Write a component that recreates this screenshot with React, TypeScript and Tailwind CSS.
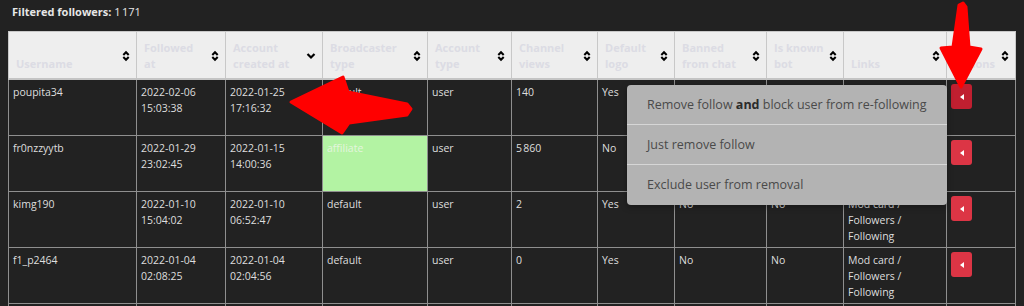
import React from 'react';

type Follower = {
    username: string;
    followedAt: [string, string];
    createdAt: [string, string];
    broadcasterType: string;
    accountType: string;
    views: string;
    defaultLogo: string;
    banned: string;
    knownBot: string;
};

const columns = [
    { label: ['Username'], width: 128, sort: 'both' },
    { label: ['Followed', 'at'], width: 89, sort: 'both' },
    { label: ['Account', 'created at'], width: 97, sort: 'desc' },
    { label: ['Broadcaster', 'type'], width: 105, sort: 'both' },
    { label: ['Account', 'type'], width: 84, sort: 'both' },
    { label: ['Channel', 'views'], width: 86, sort: 'both' },
    { label: ['Default', 'logo'], width: 77, sort: 'both' },
    { label: ['Banned', 'from chat'], width: 92, sort: 'both' },
    { label: ['Is known', 'bot'], width: 77, sort: 'both' },
    { label: ['Links'], width: 103, sort: 'both' },
    { label: ['Actions'], width: 69, sort: 'both' },
];

const followers: Follower[] = [
    {
        username: 'poupita34',
        followedAt: ['2022-02-06', '15:03:38'],
        createdAt: ['2022-01-25', '17:16:32'],
        broadcasterType: 'default',
        accountType: 'user',
        views: '140',
        defaultLogo: 'Yes',
        banned: 'No',
        knownBot: 'No',
    },
    {
        username: 'fr0nzzyytb',
        followedAt: ['2022-01-29', '23:02:45'],
        createdAt: ['2022-01-15', '14:00:36'],
        broadcasterType: 'affiliate',
        accountType: 'user',
        views: '5\u202F860',
        defaultLogo: 'No',
        banned: 'No',
        knownBot: 'No',
    },
    {
        username: 'kimg190',
        followedAt: ['2022-01-10', '15:04:02'],
        createdAt: ['2022-01-10', '06:52:47'],
        broadcasterType: 'default',
        accountType: 'user',
        views: '2',
        defaultLogo: 'Yes',
        banned: 'No',
        knownBot: 'No',
    },
    {
        username: 'f1_p2464',
        followedAt: ['2022-01-04', '02:08:25'],
        createdAt: ['2022-01-04', '02:04:56'],
        broadcasterType: 'default',
        accountType: 'user',
        views: '0',
        defaultLogo: 'Yes',
        banned: 'No',
        knownBot: 'No',
    },
];

function SortIcon({ sort }: { sort: string }) {
    if (sort === 'desc') {
        return (
            <svg width="10" height="8" viewBox="0 0 10 8" className="shrink-0">
                <path d="M1.5 2 L5 5.5 L8.5 2" fill="none" stroke="#000" strokeWidth="2.2" />
            </svg>
        );
    }
    return (
        <svg width="8" height="12" viewBox="0 0 8 12" className="shrink-0">
            <path d="M1.3 5 L4 2.2 L6.7 5" fill="none" stroke="#000" strokeWidth="2" />
            <path d="M1.3 7 L4 9.8 L6.7 7" fill="none" stroke="#000" strokeWidth="2" />
        </svg>
    );
}

function ActionButton({ active }: { active?: boolean }) {
    return (
        <button
            className={`flex items-center justify-center w-[21px] h-[25px] rounded-[3px] ${
                active ? 'bg-[#c01f30]' : 'bg-[#dc3545]'
            }`}
        >
            <svg width="4" height="6" viewBox="0 0 4 6">
                <path d="M4 0 L0 3 L4 6 Z" fill="#fff" />
            </svg>
        </button>
    );
}

function RemoveMenu() {
    return (
        <div className="absolute right-full top-[1px] mr-[4px] w-[320px] rounded-[4px] bg-[#b3b3b3] text-[12.5px] leading-[16px] text-[#4a4a4a] shadow-[0_2px_6px_rgba(0,0,0,0.35)]">
            <div className="h-[39px] flex items-center px-5 whitespace-nowrap">
                <span>
                    Remove follow <b className="font-bold text-[#2b2b2b]">and</b> block user from re-following
                </span>
            </div>
            <div className="h-[1px] bg-[#d6d6d6]" />
            <div className="h-[39px] flex items-center px-5">Just remove follow</div>
            <div className="h-[1px] bg-[#d6d6d6]" />
            <div className="h-[40px] flex items-center px-5">Exclude user from removal</div>
        </div>
    );
}

export default function App() {
    const cell = 'border border-[#8f8f8f] align-top px-[4px] pt-[4px] pb-[3px]';

    return (
        <div
            className="relative w-[1024px] h-[306px] overflow-hidden bg-[#222222] text-[11px] leading-[16px] text-[#dedede]"
            style={{ fontFamily: '"Open Sans", "Noto Sans", sans-serif' }}
        >
            {/* Counter */}
            <div className="px-[12px] pt-[4px] h-[31px] text-[#e6e6e6]">
                <span className="font-bold">Filtered followers:</span> 1&#8239;171
            </div>

            {/* Followers table */}
            <table className="ml-[8px] w-[1007px] table-fixed border-collapse">
                <colgroup>
                    {columns.map((col, i) => (
                        <col key={i} style={{ width: col.width }} />
                    ))}
                </colgroup>
                <thead>
                    <tr className="bg-[#eeeeee]">
                        {columns.map((col, i) => (
                            <th
                                key={i}
                                className="border border-[#c8c8c8] border-b-2 border-b-[#c4c4c4] pl-[7px] pr-[6px] pt-[8px] pb-[6px] text-left font-bold text-[#dcdce4]"
                            >
                                <div className="flex items-center justify-between gap-1">
                                    <div className="flex flex-col justify-end h-[32px]">
                                        {col.label.map((line) => (
                                            <span key={line}>{line}</span>
                                        ))}
                                    </div>
                                    <SortIcon sort={col.sort} />
                                </div>
                            </th>
                        ))}
                    </tr>
                </thead>
                <tbody className="text-[10.5px]">
                    {followers.map((f, i) => (
                        <tr key={f.username}>
                            <td className={cell}>{f.username}</td>
                            <td className={cell}>
                                <div>{f.followedAt[0]}</div>
                                <div>{f.followedAt[1]}</div>
                            </td>
                            <td className={cell}>
                                <div>{f.createdAt[0]}</div>
                                <div>{f.createdAt[1]}</div>
                            </td>
                            <td
                                className={`${cell} ${
                                    f.broadcasterType === 'affiliate' ? 'bg-[#b3f3a3] text-[#e4f5de]' : ''
                                }`}
                            >
                                {f.broadcasterType}
                            </td>
                            <td className={cell}>{f.accountType}</td>
                            <td className={cell}>{f.views}</td>
                            <td className={cell}>{f.defaultLogo}</td>
                            <td className={cell}>{f.banned}</td>
                            <td className={cell}>{f.knownBot}</td>
                            <td className={cell}>
                                <div>Mod card /</div>
                                <div>Followers /</div>
                                <div>Following</div>
                            </td>
                            <td className={cell}>
                                <div className="relative w-[21px]">
                                    <ActionButton active={i === 0} />
                                    {i === 0 && <RemoveMenu />}
                                </div>
                            </td>
                        </tr>
                    ))}
                    {/* next row, cut off by the window */}
                    <tr>
                        {columns.map((col, i) => (
                            <td key={i} className={`${cell} h-[56px]`} />
                        ))}
                    </tr>
                </tbody>
            </table>

            {/* Annotation arrows */}
            <svg className="absolute left-0 top-0 pointer-events-none" width="1024" height="306">
                <polygon
                    points="291,102 343,77 348,92 407,104 411,109 407,115 349,123 342,133"
                    fill="#ff0000"
                    stroke="#ff0000"
                    strokeWidth="3"
                    strokeLinejoin="round"
                />
                <polygon
                    points="959,5 963,3 966,7 969,47 981,49 961,87 941,48 953,47"
                    fill="#ff0000"
                    stroke="#ff0000"
                    strokeWidth="3"
                    strokeLinejoin="round"
                />
            </svg>
        </div>
    );
}
